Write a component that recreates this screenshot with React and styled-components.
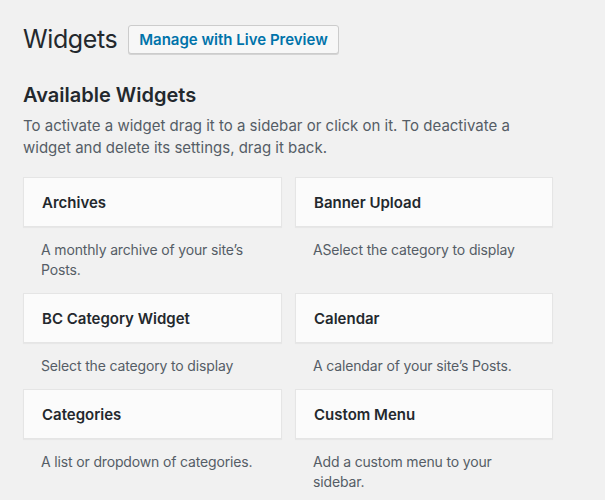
import React from 'react';
import styled, { createGlobalStyle } from 'styled-components';

const GlobalStyle = createGlobalStyle`
  body {
    margin: 0;
    background: #f1f1f1;
    font-family: Inter, "Liberation Sans", sans-serif;
    color: #23282d;
  }
`;

const Page = styled.div`
  padding: 22px 0 0 23px;
`;

const Header = styled.div`
  display: flex;
  align-items: center;
  gap: 11px;
`;

const Title = styled.h1`
  margin: 0;
  font-size: 25px;
  font-weight: 400;
  letter-spacing: -0.4px;
  line-height: 34px;
`;

const PreviewButton = styled.button`
  height: 29px;
  padding: 0 10px;
  background: #f7f7f7;
  border: 1px solid #cccccc;
  border-radius: 3px;
  box-shadow: 0 1px 0 #d4d4d4;
  font-family: inherit;
  font-size: 15px;
  font-weight: 600;
  color: #0073aa;
  cursor: pointer;
`;

const SectionTitle = styled.h2`
  margin: 26px 0 0;
  font-size: 20px;
  font-weight: 600;
  line-height: 26px;
`;

const Intro = styled.p`
  margin: 7px 0 0;
  width: 500px;
  font-size: 15px;
  line-height: 22px;
  color: #555d66;
`;

const Grid = styled.div`
  display: grid;
  grid-template-columns: 259px 258px;
  column-gap: 13px;
  margin-top: 18px;
`;

const Widget = styled.div`
  display: flex;
  flex-direction: column;
`;

const WidgetTop = styled.div`
  height: 50px;
  box-sizing: border-box;
  display: flex;
  align-items: center;
  padding: 0 18px;
  background: #fbfbfb;
  border: 1px solid #e5e5e5;
  box-shadow: 0 1px 1px rgba(0, 0, 0, 0.04);
  font-size: 15px;
  font-weight: 600;
  color: #23282d;
`;

const WidgetDesc = styled.div`
  padding: 13px 16px 13px 18px;
  font-size: 14px;
  letter-spacing: -0.15px;
  line-height: 20px;
  color: #555d66;
`;

const widgets = [
  { name: 'Archives', desc: 'A monthly archive of your site\u2019s Posts.' },
  { name: 'Banner Upload', desc: 'ASelect the category to display' },
  { name: 'BC Category Widget', desc: 'Select the category to display' },
  { name: 'Calendar', desc: 'A calendar of your site\u2019s Posts.' },
  { name: 'Categories', desc: 'A list or dropdown of categories.' },
  { name: 'Custom Menu', desc: 'Add a custom menu to your sidebar.' },
];

export default function App() {
  return (
    <Page>
      <GlobalStyle />
      <Header>
        <Title>Widgets</Title>
        <PreviewButton>Manage with Live Preview</PreviewButton>
      </Header>
      <SectionTitle>Available Widgets</SectionTitle>
      <Intro>
        To activate a widget drag it to a sidebar or click on it. To deactivate a
        widget and delete its settings, drag it back.
      </Intro>
      <Grid>
        {widgets.map((w) => (
          <Widget key={w.name}>
            <WidgetTop>{w.name}</WidgetTop>
            <WidgetDesc>{w.desc}</WidgetDesc>
          </Widget>
        ))}
      </Grid>
    </Page>
  );
}
